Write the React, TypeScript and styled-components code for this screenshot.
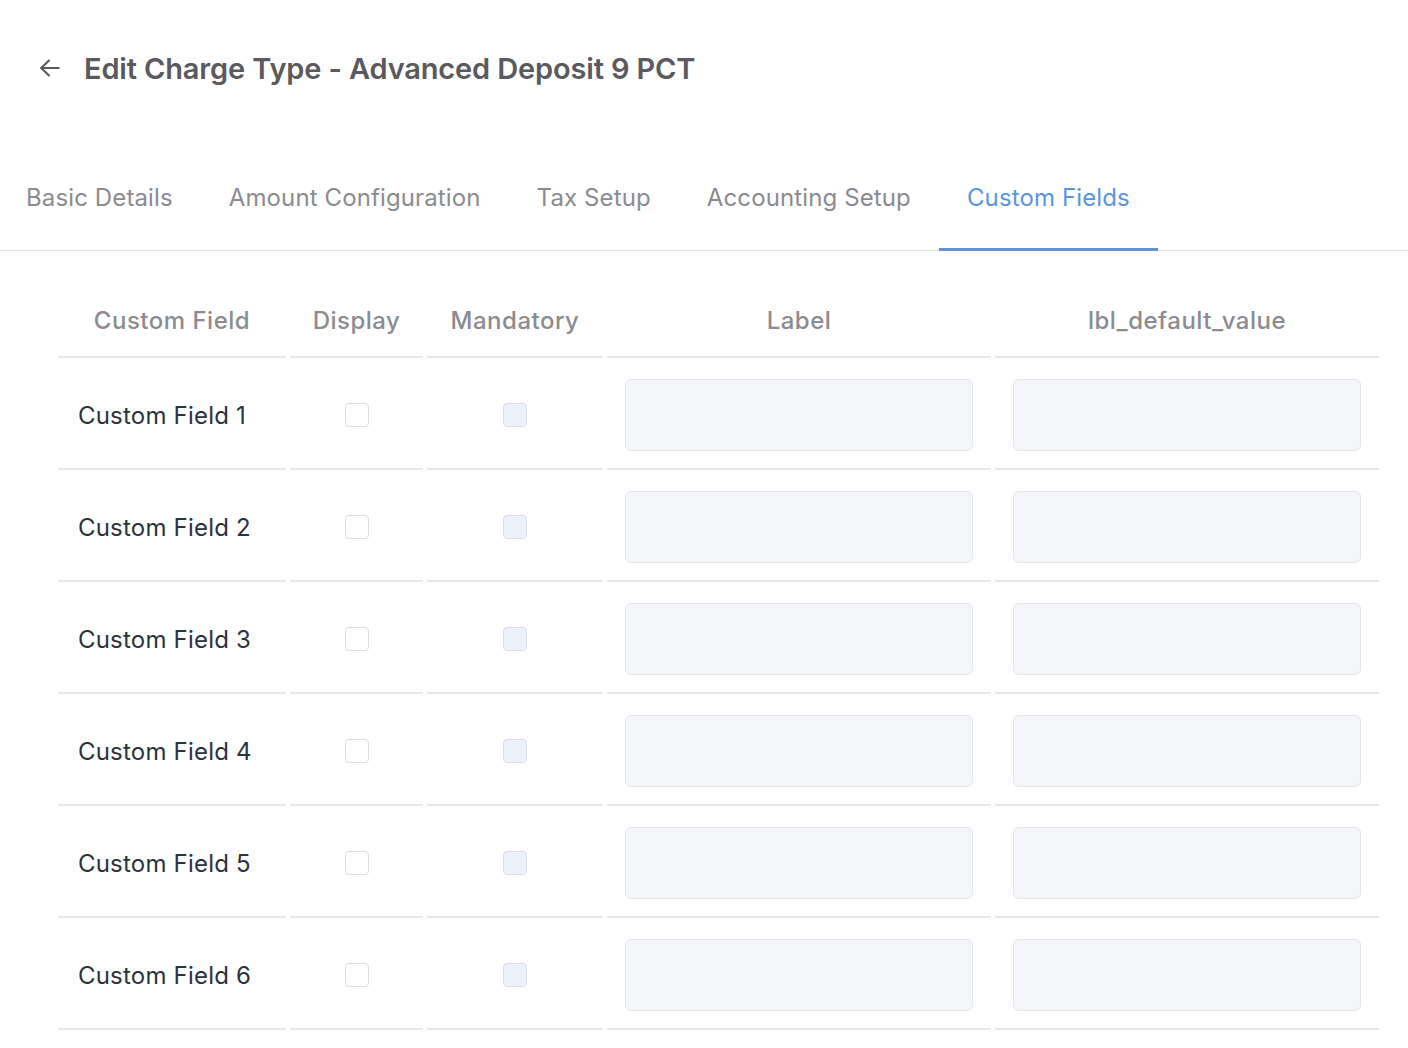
import * as React from 'react';
import styled, { createGlobalStyle } from 'styled-components';

const GlobalStyle = createGlobalStyle`
  body {
    margin: 0;
    background: #ffffff;
    font-family: Inter, "Noto Sans", sans-serif;
  }
`;

const Page = styled.div`
  width: 1408px;
  min-height: 1048px;
  background: #ffffff;
`;

const Header = styled.div`
  display: flex;
  align-items: center;
  gap: 20px;
  height: 48px;
  padding: 44px 0 0 36px;
`;

const BackButton = styled.button`
  display: flex;
  align-items: center;
  justify-content: center;
  width: 28px;
  height: 28px;
  padding: 0;
  border: none;
  background: none;
  color: #5c5c60;
  cursor: pointer;
`;

const Title = styled.h1`
  margin: 0;
  font-size: 29px;
  font-weight: 600;
  letter-spacing: -0.15px;
  color: #5a5a5e;
`;

const Tabs = styled.div`
  display: flex;
  margin-top: 80px;
  margin-left: -2px;
  border-bottom: 1px solid #e4e4e6;
`;

const Tab = styled.div<{ $active?: boolean }>`
  padding: 0 28px;
  height: 79px;
  line-height: 52px;
  font-size: 24px;
  font-weight: 400;
  letter-spacing: 0.12px;
  color: ${(p) => (p.$active ? '#5b95e0' : '#8b8b8f')};
  border-bottom: 3px solid ${(p) => (p.$active ? '#5b95e0' : 'transparent')};
  box-sizing: border-box;
  margin-bottom: -1px;
`;

const Table = styled.table`
  margin: 26px 0 0 54px;
  border-collapse: separate;
  border-spacing: 4px 0;
`;

const HeadCell = styled.th<{ $w: number }>`
  width: ${(p) => p.$w}px;
  height: 71px;
  padding: 8px 0 0;
  text-align: center;
  vertical-align: middle;
  font-size: 24px;
  font-weight: 500;
  letter-spacing: 0.5px;
  color: #8b8b90;
  border-bottom: 2px solid #e8e8ea;
`;

const Cell = styled.td<{ $align?: string }>`
  height: 106px;
  padding: 4px 0 0;
  text-align: ${(p) => p.$align || 'center'};
  vertical-align: middle;
  border-bottom: 2px solid #e8e8ea;
`;

const FieldName = styled.span`
  padding-left: 20px;
  font-size: 24px;
  letter-spacing: 0.2px;
  color: #2b3240;
`;

const Box = styled.span<{ $tint?: boolean }>`
  display: inline-block;
  width: 24px;
  height: 24px;
  box-sizing: border-box;
  border: 1px solid #dcdde0;
  border-radius: 4px;
  background: ${(p) => (p.$tint ? '#edf1fa' : '#ffffff')};
  vertical-align: middle;
`;

const Input = styled.input`
  display: block;
  margin: 0 auto;
  width: 348px;
  height: 72px;
  box-sizing: border-box;
  border: 1px solid #e3e5e9;
  border-radius: 6px;
  background: #f5f6f9;
  outline: none;
`;

const tabs = ['Basic Details', 'Amount Configuration', 'Tax Setup', 'Accounting Setup', 'Custom Fields'];

const fields = [1, 2, 3, 4, 5, 6];

export default function App() {
  return (
    <Page>
      <GlobalStyle />
      <Header>
        <BackButton aria-label="Back">
          <svg width="26" height="26" viewBox="0 0 24 24" fill="none" stroke="currentColor" strokeWidth="2" strokeLinecap="round" strokeLinejoin="round">
            <path d="M20 12H4" />
            <path d="M11 5l-7 7 7 7" />
          </svg>
        </BackButton>
        <Title>Edit Charge Type - Advanced Deposit 9 PCT</Title>
      </Header>
      <Tabs>
        {tabs.map((t) => (
          <Tab key={t} $active={t === 'Custom Fields'}>
            {t}
          </Tab>
        ))}
      </Tabs>
      <Table>
        <thead>
          <tr>
            <HeadCell $w={228}>Custom Field</HeadCell>
            <HeadCell $w={133}>Display</HeadCell>
            <HeadCell $w={176}>Mandatory</HeadCell>
            <HeadCell $w={384}>Label</HeadCell>
            <HeadCell $w={384}>lbl_default_value</HeadCell>
          </tr>
        </thead>
        <tbody>
          {fields.map((n) => (
            <tr key={n}>
              <Cell $align="left">
                <FieldName>Custom Field {n}</FieldName>
              </Cell>
              <Cell>
                <Box />
              </Cell>
              <Cell>
                <Box $tint />
              </Cell>
              <Cell>
                <Input />
              </Cell>
              <Cell>
                <Input />
              </Cell>
            </tr>
          ))}
        </tbody>
      </Table>
    </Page>
  );
}
